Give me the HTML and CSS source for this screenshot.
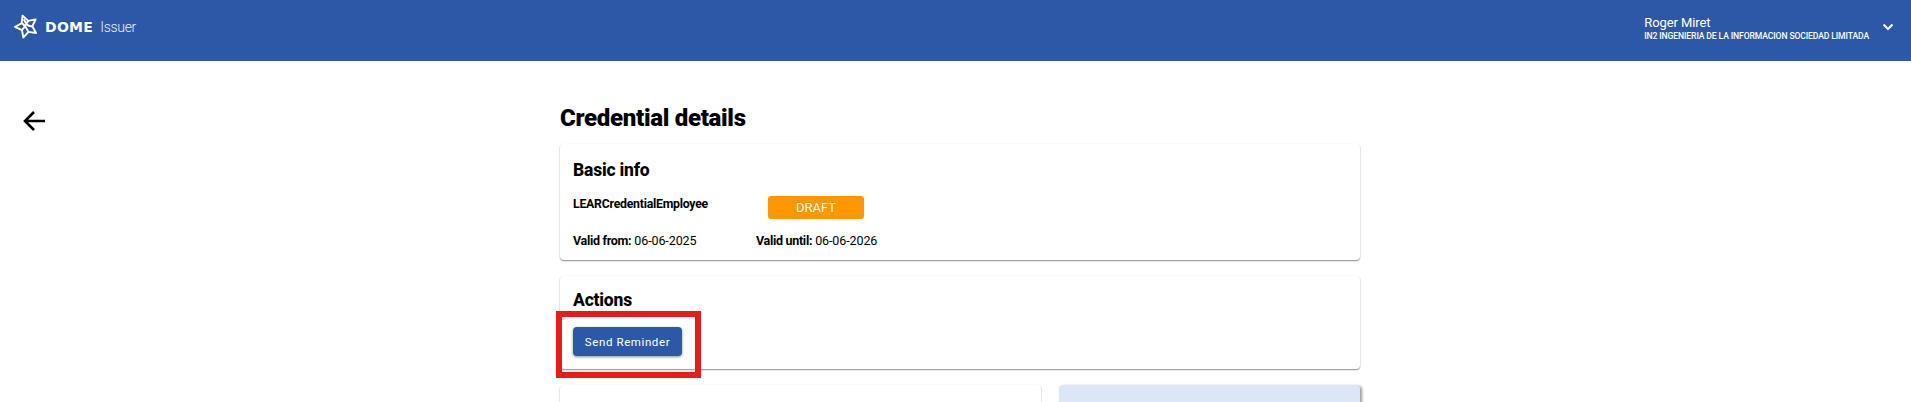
FILE: index.html
```html
<!DOCTYPE html>
<html lang="en">
<head>
<meta charset="utf-8">
<title>Credential details</title>
<link rel="stylesheet" href="styles.css">
</head>
<body>
<header class="topbar">
  <div class="brand">
    <svg class="logo" viewBox="0 0 28 26" width="27" height="25" fill="none" stroke="#fff" stroke-width="2" stroke-linejoin="round" stroke-linecap="round">
      <path d="M9.900 1.700 15.700 7.200 23.500 5.600 20 12.800 24 19.700 16 18.600 10.700 24.500 9.300 16.700 2 13.400 9 9.600Z"/>
      <path d="M9 9.600C12 11 13.500 14 16 18.600M15.700 7.200C14.500 10 12.500 13 9.300 16.700M20 12.800C17 13 14 12 11.500 6"/>
    </svg>
    <span class="brand-name">DOME</span>
    <span class="brand-sub">Issuer</span>
  </div>
  <div class="user">
    <div class="user-text">
      <div class="user-name">Roger Miret</div>
      <div class="user-org">IN2 INGENIERIA DE LA INFORMACION SOCIEDAD LIMITADA</div>
    </div>
    <svg class="chevron" viewBox="0 0 12 8" width="12" height="8" fill="none" stroke="#fff" stroke-width="2"><path d="M1.500 1.500 6 6l4.500-4.500"/></svg>
  </div>
</header>
<main class="page">
  <div class="back-col">
    <svg class="back" viewBox="0 0 24 24" width="24" height="24" fill="none" stroke="#000" stroke-width="2.600"><path d="M23 12H3M12 3l-9 9 9 9"/></svg>
  </div>
  <div class="content">
    <h1 class="title">Credential details</h1>
    <section class="card card-basic">
      <h2 class="card-title">Basic info</h2>
      <div class="row row-type">
        <span class="type-name">LEARCredentialEmployee</span>
        <span class="status">DRAFT</span>
      </div>
      <div class="row row-dates">
        <span class="date date-from"><b>Valid from:</b> 06-06-2025</span>
        <span class="date"><b>Valid until:</b> 06-06-2026</span>
      </div>
    </section>
    <section class="card card-actions">
      <h2 class="card-title">Actions</h2>
      <button class="btn" type="button">Send Reminder</button>
      <div class="highlight"></div>
    </section>
    <div class="lower">
      <section class="card lower-main"></section>
      <section class="card lower-side"></section>
    </div>
  </div>
</main>
</body>
</html>
```
FILE: styles.css
```css
* { box-sizing: border-box; }
html, body { margin: 0; height: 402px; overflow: hidden; background: #fff; }
body { font-family: "Roboto", "Liberation Sans", sans-serif; color: #000; }

.topbar {
  height: 61px;
  background: #2d58a7;
  color: #fff;
  display: flex;
  justify-content: space-between;
  padding: 0 17px 0 13px;
}
.brand { display: flex; align-items: center; height: 53px; }
.logo { margin-right: 5px; }
.brand-name { font-family: "DejaVu Sans", sans-serif; font-weight: 700; font-size: 14px; letter-spacing: .3px; margin-right: 7px; }
.brand-sub { font-size: 14px; font-weight: 300; letter-spacing: -.3px; opacity: .9; }

.user { display: flex; align-items: center; height: 53px; }
.user-text { margin-right: 13px; margin-top: 4px; }
.user-name { font-size: 13px; line-height: 15px; letter-spacing: -.1px; }
.user-org { font-size: 8.600px; line-height: 12px; font-weight: 500; letter-spacing: -.12px; }

.page { position: relative; display: flex; justify-content: center; padding-left: 9px; height: 341px; overflow: hidden; }
.back-col { position: absolute; left: 22px; top: 48px; }
.back { display: block; }

.content { width: 800px; margin-top: 45px; }
.title { margin: 0 0 13px; font-size: 24px; line-height: 25px; font-weight: 900; letter-spacing: -.3px; }

.card {
  background: #fff;
  border-radius: 4px;
  box-shadow: 0 1px 1.500px rgba(0,0,0,.45), 0 0 2px rgba(0,0,0,.03);
  padding: 0 13px;
}
.card-basic { height: 116px; padding-top: 15px; margin-bottom: 16px; }
.card-actions { position: relative; height: 93px; padding-top: 13px; margin-bottom: 16px; }
.card-title { margin: 0; font-size: 17.500px; line-height: 22px; font-weight: 800; letter-spacing: -.2px; }

.row { display: flex; }
.row-type { margin-top: 15px; height: 24px; }
.type-name { width: 195px; font-size: 12.300px; font-weight: 700; line-height: 14px; margin-top: 1px; letter-spacing: -.25px; }
.status {
  width: 96px;
  height: 23px;
  background: #ff9800;
  border-radius: 3px;
  color: #fff;
  font-size: 13px;
  line-height: 23px;
  text-align: center;
}
.row-dates { margin-top: 13px; font-size: 12.500px; line-height: 15px; letter-spacing: -.1px; }
.date b { font-weight: 700; letter-spacing: -.3px; }
.date-from { width: 183px; }

.btn {
  display: block;
  margin-top: 16px;
  width: 109px;
  height: 29px;
  border: 0;
  border-radius: 4px;
  background: #2d58a7;
  color: #fff;
  font: 400 11.500px "Roboto", sans-serif;
  letter-spacing: .6px;
  box-shadow: 0 1px 3px rgba(0,0,0,.45);
  padding: 0;
}
.highlight {
  position: absolute;
  left: -4px;
  top: 35px;
  width: 145px;
  height: 67px;
  border: 6px solid #e81c1c;
}

.lower { display: flex; gap: 18px; }
.lower-main { width: 481px; height: 60px; }
.lower-side { width: 301px; height: 60px; background: #dde6f6; box-shadow: 2px 1px 3px rgba(0,0,0,.4); }
```
